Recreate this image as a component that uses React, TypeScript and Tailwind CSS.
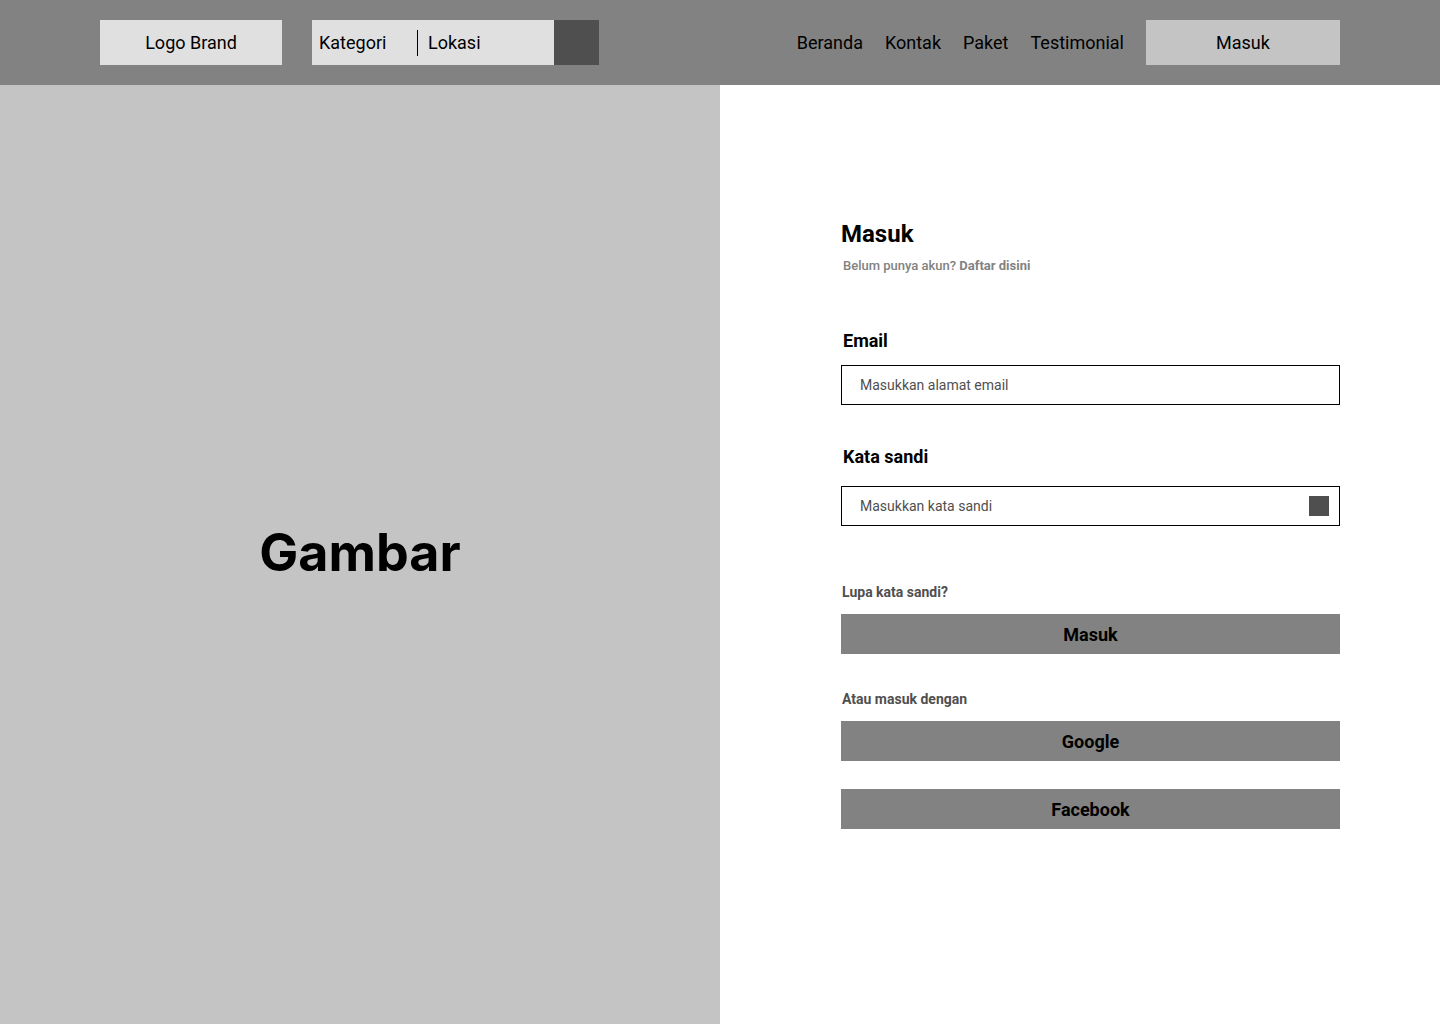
import { useState } from 'react'

const font = { fontFamily: 'Roboto, "Noto Sans", sans-serif' }

function Header() {
  return (
    <header className="h-[85px] bg-[#828282] flex items-center px-[100px]">
      <div className="w-[182px] h-[45px] bg-[#e0e0e0] flex items-center justify-center text-[18px] text-black">
        Logo Brand
      </div>
      <div className="ml-[30px] h-[45px] flex">
        <div className="w-[242px] bg-[#e0e0e0] flex items-center text-[18px] text-black">
          <span className="pl-[7px] w-[105px]">Kategori</span>
          <span className="w-px h-[26px] bg-black" />
          <span className="pl-[10px]">Lokasi</span>
        </div>
        <button className="w-[45px] h-[45px] bg-[#4f4f4f]" aria-label="Cari" />
      </div>
      <nav className="ml-auto flex items-center gap-[22px] text-[18px] text-black">
        <a className="ml-px">Beranda</a>
        <a>Kontak</a>
        <a>Paket</a>
        <a>Testimonial</a>
        <button className="w-[194px] h-[45px] bg-[#c4c4c4] text-[18px]">Masuk</button>
      </nav>
    </header>
  )
}

function LoginForm() {
  const [show, setShow] = useState(false)
  return (
    <div className="w-[499px] pt-[135px] ml-[121px] flex flex-col">
      <h1 className="text-[24px] leading-[28px] font-bold text-black">Masuk</h1>
      <p className="mt-[10px] ml-[2px] text-[13px] leading-[16px] font-medium text-[#828282]">
        Belum punya akun? <span className="font-bold">Daftar disini</span>
      </p>

      <label className="mt-[56px] ml-[2px] text-[18px] leading-[21px] font-bold text-black">Email</label>
      <div className="mt-[14px] h-[40px] border border-black flex items-center px-[18px]">
        <input
          className="w-full outline-none text-[14px] placeholder:text-[#4f4f4f]"
          placeholder="Masukkan alamat email"
        />
      </div>

      <label className="mt-[41px] ml-[2px] text-[18px] leading-[21px] font-bold text-black">Kata sandi</label>
      <div className="mt-[19px] h-[40px] border border-black flex items-center pl-[18px] pr-[10px]">
        <input
          type={show ? 'text' : 'password'}
          className="flex-1 outline-none text-[14px] placeholder:text-[#4f4f4f]"
          placeholder="Masukkan kata sandi"
        />
        <button onClick={() => setShow(s => !s)} className="w-[20px] h-[20px] bg-[#4f4f4f]" aria-label="Tampilkan" />
      </div>

      <a className="mt-[58px] ml-[1px] text-[14px] leading-[16px] font-bold text-[#4f4f4f]">Lupa kata sandi?</a>
      <button className="mt-[14px] h-[40px] bg-[#828282] text-[18px] font-bold text-black">Masuk</button>

      <p className="mt-[37px] ml-[1px] text-[14px] leading-[16px] font-bold text-[#4f4f4f]">Atau masuk dengan</p>
      <button className="mt-[14px] h-[40px] bg-[#828282] text-[18px] font-bold text-black">Google</button>
      <button className="mt-[28px] h-[40px] bg-[#828282] text-[18px] font-bold text-black">Facebook</button>
    </div>
  )
}

export default function App() {
  return (
    <div className="w-[1440px] h-[1024px] flex flex-col bg-white overflow-hidden" style={font}>
      <Header />
      <main className="flex-1 flex">
        <section className="w-[720px] bg-[#c4c4c4] flex items-center justify-center">
          <h2
            className="text-[52px] font-bold text-black pb-[4px]"
            style={{ fontFamily: 'Inter, "Noto Sans", sans-serif' }}
          >
            Gambar
          </h2>
        </section>
        <section className="flex-1 bg-white">
          <LoginForm />
        </section>
      </main>
    </div>
  )
}
